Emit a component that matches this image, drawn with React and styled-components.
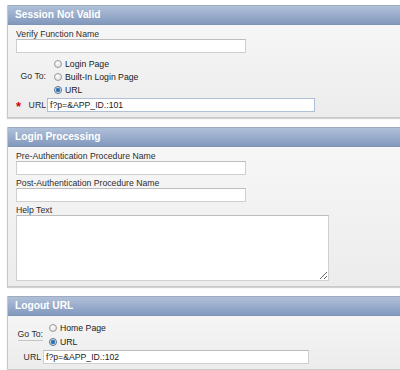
import React from "react";
import styled, { createGlobalStyle } from "styled-components";

const GlobalStyle = createGlobalStyle`
  body {
    margin: 0;
    background: #ffffff;
    font-family: "Liberation Sans", Arial, sans-serif;
    overflow: hidden;
  }
`;

const Page = styled.div`
  display: flex;
  flex-direction: column;
  gap: 9px;
  padding: 5px 0 0 7px;
  width: 400px;
`;

const Panel = styled.section`
  border: 1px solid #c9c9c9;
  border-right: none;
  background: linear-gradient(#f8f8f8, #ececec);
  box-shadow: 0 1px 1px rgba(0, 0, 0, 0.18);
`;

const PanelHeader = styled.h2`
  margin: -1px 0 0;
  height: 18px;
  line-height: 18px;
  padding-left: 7px;
  font-size: 10.2px;
  font-weight: bold;
  color: #ffffff;
  background: linear-gradient(#b0c0d9, #8299bd);
  border-top: 1px solid #9eabbf;
  border-bottom: 1px solid #7c93b6;
`;

const PanelBody = styled.div`
  padding: ${p => p.$pad || "1px 0 5px 8px"};
  display: flex;
  flex-direction: column;
`;

const Label = styled.div`
  font-size: 8.7px;
  line-height: 10px;
  padding-top: 3px;
  color: #2e2e2e;
`;

const TextInput = styled.input`
  box-sizing: border-box;
  width: ${p => p.$w}px;
  height: 14px;
  margin: 0;
  padding: 0 2px;
  font-family: "Liberation Sans", Arial, sans-serif;
  font-size: 8.7px;
  color: #222222;
  background: #ffffff;
  border: 1px solid ${p => p.$border || "#cfcfcf"};
  border-top-color: ${p => p.$border || "#bdbdbd"};
  outline: none;
`;

const TextArea = styled.textarea`
  box-sizing: border-box;
  width: ${p => p.$w}px;
  height: 66px;
  margin: 0;
  padding: 2px;
  font-family: "Liberation Sans", Arial, sans-serif;
  font-size: 8.7px;
  background: #ffffff;
  border: 1px solid #cfcfcf;
  border-top-color: #bdbdbd;
  outline: none;
  display: block;
`;

const FieldGrid = styled.div`
  display: grid;
  grid-template-columns: ${p => p.$labelWidth}px auto;
  column-gap: ${p => p.$gap}px;
  align-items: center;
  margin-top: ${p => p.$top || 0}px;
`;

const SideLabel = styled.div`
  font-size: 8.7px;
  color: #2e2e2e;
  text-align: right;
  justify-self: ${p => (p.$spread ? "stretch" : "end")};
  display: ${p => (p.$spread ? "flex" : "block")};
  justify-content: space-between;
  align-items: center;
  line-height: 11px;
  border-bottom: ${p => (p.$underline ? "1px solid #c4c4c4" : "none")};
`;

const Star = styled.span`
  color: #d40000;
  font-weight: bold;
  font-size: 13px;
  line-height: 11px;
  height: 11px;
  margin-top: 3px;
`;

const RadioList = styled.div`
  display: flex;
  flex-direction: column;
`;

const RadioRow = styled.div`
  display: flex;
  align-items: center;
  gap: 3px;
  height: ${p => p.$h}px;
  font-size: 8.7px;
  color: #222222;
`;

const RadioDot = styled.span`
  box-sizing: border-box;
  width: 8px;
  height: 8px;
  border-radius: 50%;
  border: 1px solid ${p => (p.$checked ? "#5a6f86" : "#9a9a9a")};
  background: ${p =>
    p.$checked
      ? "radial-gradient(circle, #1c5f9c 0, #3f86c4 2px, #dfe9f3 2.6px, #ffffff 100%)"
      : "radial-gradient(circle at 40% 35%, #ffffff, #d6d6d6)"};
`;

function Radios({ items, checked, rowHeight }) {
  return (
    <RadioList>
      {items.map(item => (
        <RadioRow key={item} $h={rowHeight}>
          <RadioDot $checked={item === checked} />
          {item}
        </RadioRow>
      ))}
    </RadioList>
  );
}

export default function App() {
  return (
    <>
      <GlobalStyle />
      <Page>
        <Panel>
          <PanelHeader>Session Not Valid</PanelHeader>
          <PanelBody $pad="1px 0 5px 8px">
            <Label>Verify Function Name</Label>
            <TextInput $w={230} readOnly value="" />
            <FieldGrid $labelWidth={30} $gap={8} $top={4}>
              <SideLabel>Go To:</SideLabel>
              <Radios
                items={["Login Page", "Built-In Login Page", "URL"]}
                checked="URL"
                rowHeight={13}
              />
            </FieldGrid>
            <FieldGrid $labelWidth={30} $gap={1} $top={2}>
              <SideLabel $spread>
                <Star>*</Star>URL
              </SideLabel>
              <TextInput
                $w={268}
                $border="#aebfd6"
                readOnly
                value="f?p=&APP_ID.:101"
              />
            </FieldGrid>
          </PanelBody>
        </Panel>

        <Panel>
          <PanelHeader>Login Processing</PanelHeader>
          <PanelBody $pad="1px 0 5px 8px">
            <Label>Pre-Authentication Procedure Name</Label>
            <TextInput $w={230} readOnly value="" />
            <Label>Post-Authentication Procedure Name</Label>
            <TextInput $w={230} readOnly value="" />
            <Label>Help Text</Label>
            <TextArea $w={313} readOnly value="" />
          </PanelBody>
        </Panel>

        <Panel>
          <PanelHeader>Logout URL</PanelHeader>
          <PanelBody $pad="5px 0 5px 9px">
            <FieldGrid $labelWidth={26} $gap={6}>
              <SideLabel $underline>Go To:</SideLabel>
              <Radios items={["Home Page", "URL"]} checked="URL" rowHeight={14} />
            </FieldGrid>
            <FieldGrid $labelWidth={24} $gap={2} $top={1}>
              <SideLabel>URL</SideLabel>
              <TextInput $w={266} readOnly value="f?p=&APP_ID.:102" />
            </FieldGrid>
          </PanelBody>
        </Panel>
      </Page>
    </>
  );
}
